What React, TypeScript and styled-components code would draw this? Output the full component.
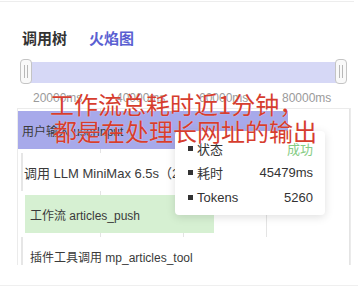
import React from "react";
import styled, { createGlobalStyle } from "styled-components";

const GlobalStyle = createGlobalStyle`
  html, body { margin: 0; padding: 0; background: #fff; }
  body { font-family: "Liberation Sans", "Noto Sans CJK SC", sans-serif; }
`;

const Page = styled.div`
  position: relative;
  width: 358px;
  height: 305px;
  overflow: hidden;
  background: #fff;
`;

const TopRule = styled.div`
  margin-top: 1px;
  width: 354px;
  height: 1px;
  background: #ededed;
`;

const Tabs = styled.div`
  display: flex;
  gap: 22px;
  padding: 27px 0 0 22px;
  height: 20px;
`;

const Tab = styled.div<{ $active?: boolean }>`
  font-size: 15px;
  line-height: 20px;
  font-weight: 600;
  color: ${(p) => (p.$active ? "#5a5fd2" : "#333")};
`;

const Slider = styled.div`
  position: relative;
  margin: 13px 0 0 22px;
  width: 318px;
  height: 21px;
  background: #d6d8f6;
`;

const Handle = styled.div<{ $side: "left" | "right" }>`
  position: absolute;
  top: -3px;
  ${(p) => (p.$side === "left" ? "left: -2px;" : "right: -7px;")}
  width: 10px;
  height: 23px;
  border: 1px solid #c4c4c4;
  border-radius: 4px;
  background: #f9f9f9;
  display: flex;
  justify-content: center;
  align-items: center;
  gap: 2px;
`;

const Grip = styled.span`
  width: 1px;
  height: 13px;
  background: #b8b8b8;
`;

const Axis = styled.div`
  display: grid;
  grid-template-columns: repeat(4, 83px);
  padding-left: 33px;
  margin-top: 7px;
  height: 16px;
`;

const AxisLabel = styled.span`
  font-size: 12px;
  line-height: 16px;
  color: #9a9a9a;
`;

const Chart = styled.div`
  margin: 2px 0 0 17px;
  width: 332px;
  height: 154px;
  border: 1px solid #ebebeb;
  border-bottom: none;
  overflow: hidden;
  display: flex;
  flex-direction: column;
  gap: 4px;
  padding-top: 2px;
  box-sizing: content-box;
  background-image: linear-gradient(to right, #e4e4e4 1px, transparent 1px);
  background-size: 83px 100%;
  background-position: 82px 0;
`;

const Bar = styled.div<{ $indent: number; $width: number; $bg: string; $edge?: boolean; $pad: number; $size: number }>`
  flex: none;
  margin-left: ${(p) => p.$indent}px;
  width: ${(p) => p.$width}px;
  height: 38px;
  box-sizing: border-box;
  background: ${(p) => p.$bg};
  border-left: ${(p) => (p.$edge ? "2px solid #e6e6e6" : "none")};
  padding-left: ${(p) => p.$pad}px;
  display: flex;
  align-items: center;
  white-space: nowrap;
  font-size: ${(p) => p.$size}px;
  color: #3a3a3a;
`;

const BottomRule = styled.div`
  margin-top: 20px;
  width: 358px;
  height: 1px;
  background: #efefef;
`;

const Tooltip = styled.div`
  position: absolute;
  left: 175px;
  top: 131px;
  width: 150px;
  height: 84px;
  box-sizing: border-box;
  padding: 5px 12px 0 13px;
  background: #fff;
  border-radius: 4px;
  box-shadow: 0 2px 10px rgba(0, 0, 0, 0.13);
`;

const TipRow = styled.div`
  display: flex;
  align-items: center;
  height: 24.5px;
  font-size: 13px;
  color: #333;
`;

const Dot = styled.span`
  width: 5px;
  height: 5px;
  background: #333;
  margin-right: 4px;
`;

const TipLabel = styled.span`
  flex: 1;
`;

const TipValue = styled.span<{ $ok?: boolean }>`
  color: ${(p) => (p.$ok ? "#86cc84" : "#333")};
`;

const Caption = styled.div`
  position: absolute;
  left: 50px;
  top: 90px;
  font-family: "Noto Sans CJK SC", sans-serif;
  font-size: 24px;
  line-height: 27px;
  color: #d63d2e;
  text-shadow: 0 0 1px rgba(255, 255, 255, 0.8);
  white-space: nowrap;
`;

const CaptionLine = styled.div<{ $shift: number }>`
  margin-left: ${(p) => p.$shift}px;
`;

const rows = [
  { text: "用户输入 userInput", indent: 0, width: 270, bg: "#a7a9ea", pad: 4, size: 12, edge: false },
  { text: "调用 LLM MiniMax 6.5s（24.3s）", indent: 3, width: 300, bg: "#ffffff", pad: 1, size: 13, edge: true },
  { text: "工作流 articles_push", indent: 7, width: 189, bg: "#d6f0d2", pad: 5, size: 12, edge: false },
  { text: "插件工具调用 mp_articles_tool", indent: 3, width: 280, bg: "#ffffff", pad: 7, size: 12, edge: true },
];

const tips = [
  { label: "状态", value: "成功", ok: true },
  { label: "耗时", value: "45479ms" },
  { label: "Tokens", value: "5260" },
];

export default function App() {
  return (
    <Page>
      <GlobalStyle />
      <TopRule />
      <Tabs>
        <Tab>调用树</Tab>
        <Tab $active>火焰图</Tab>
      </Tabs>
      <Slider>
        <Handle $side="left">
          <Grip />
          <Grip />
        </Handle>
        <Handle $side="right">
          <Grip />
          <Grip />
        </Handle>
      </Slider>
      <Axis>
        {["20000ms", "40000ms", "60000ms", "80000ms"].map((l) => (
          <AxisLabel key={l}>{l}</AxisLabel>
        ))}
      </Axis>
      <Chart>
        {rows.map((r) => (
          <Bar key={r.text} $indent={r.indent} $width={r.width} $bg={r.bg} $pad={r.pad} $size={r.size} $edge={r.edge}>
            {r.text}
          </Bar>
        ))}
      </Chart>
      <BottomRule />
      <Tooltip>
        {tips.map((t) => (
          <TipRow key={t.label}>
            <Dot />
            <TipLabel>{t.label}</TipLabel>
            <TipValue $ok={t.ok}>{t.value}</TipValue>
          </TipRow>
        ))}
      </Tooltip>
      <Caption>
        <CaptionLine $shift={0}>工作流总耗时近1分钟，</CaptionLine>
        <CaptionLine $shift={3}>都是在处理长网址的输出</CaptionLine>
      </Caption>
    </Page>
  );
}
